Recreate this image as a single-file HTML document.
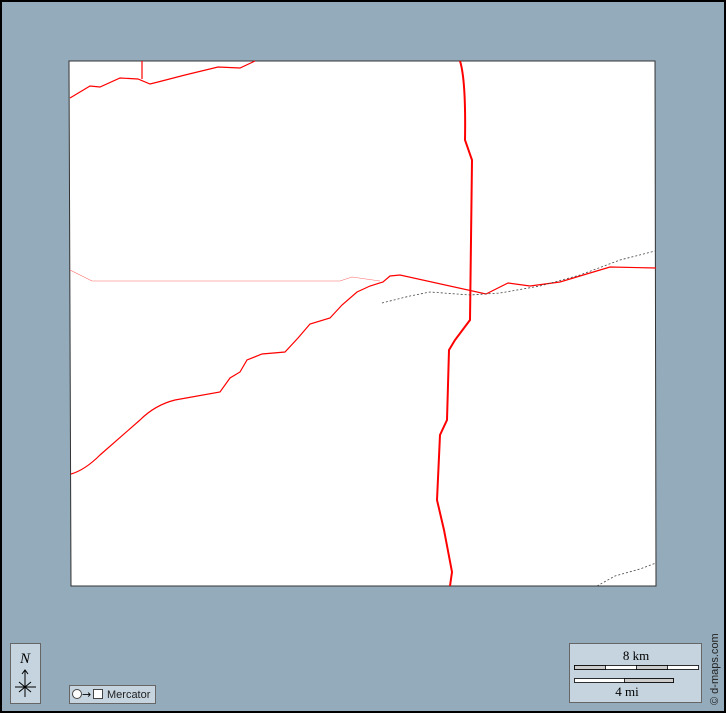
<!DOCTYPE html>
<html><head><style>
html,body{margin:0;padding:0;}
body{width:726px;height:713px;background:#94abbb;position:relative;overflow:hidden;font-family:"Liberation Serif",serif;}
.frame{position:absolute;left:0;top:0;width:722px;height:709px;border:2px solid #000;border-right-width:2px;}
</style></head><body>
<div class="frame"></div>
<svg width="726" height="713" style="position:absolute;left:0;top:0">
<polygon points="69,61 655,61 656,586 71,586" fill="#fff" stroke="#333" stroke-width="1"/>
<g fill="none" stroke="#f00">
<path d="M70,98 L90,86 L100,87 L120,78 L138,79 L150,84 L158,82 L185,75 L218,67 L240,68 L255,61" stroke-width="1.2"/>
<path d="M142,61 L142,79" stroke-width="1.2"/>
<path d="M460,61 Q466,80 465,140 L472,160 L471,240 L470,320 L455,340 L449,350 L447,420 L440,435 L437,500 L444,530 L452,572 L450,586" stroke-width="2"/>
<path d="M70,270 L92,281 L340,281 L352,277 L380,281" stroke-width="0.6" stroke="#f66"/>
<path d="M71,474 Q85,470 100,455 L140,420 Q155,405 175,400 L220,392 L230,378 L240,372 L247,360 L262,354 L285,352 L298,338 L310,324 L330,318 L342,305 L357,292 L370,286 L383,282 L390,276 L400,275 L486,294 L508,283 L530,286 L560,282 L600,270 L610,267 L656,268" stroke-width="1.2"/>
</g>
<g fill="none" stroke="#444" stroke-width="0.8" stroke-dasharray="2,2">
<path d="M382,303 L410,296 L430,292 L470,295 L500,293 L540,286 L580,275 L620,260 L655,251"/>
<path d="M597,586 L615,576 L640,569 L656,563"/>
</g>
<rect x="10.5" y="643.5" width="30" height="60" fill="#c5d4de" stroke="#666"/>
<text x="25" y="663" font-size="15" font-style="italic" text-anchor="middle" font-family="Liberation Serif">N</text>
<path d="M25,670 L25,697 M22,674 L25,670 L28,674 M15,687 L36,687 M19,682 L31,692 M31,682 L19,692" stroke="#000" fill="none" stroke-width="1"/>
<rect x="69.5" y="685.5" width="86" height="18" fill="#c5d4de" stroke="#666"/>
<circle cx="77" cy="694" r="4.5" fill="#fff" stroke="#444"/>
<text x="82" y="698" font-size="11" font-family="DejaVu Sans">→</text>
<rect x="93.5" y="689.5" width="9" height="9" fill="#fff" stroke="#444"/>
<text x="107" y="698" font-size="11" font-family="Liberation Sans" fill="#222">Mercator</text>
<rect x="569.5" y="643.5" width="132" height="59" fill="#c5d4de" stroke="#666"/>
<text x="636" y="660" font-size="13" text-anchor="middle">8 km</text>
<rect x="574.5" y="665.5" width="124" height="4" fill="#fff" stroke="#000" stroke-width="0.8"/>
<rect x="574.5" y="665.5" width="31" height="4" fill="#ccc" stroke="#000" stroke-width="0.8"/>
<rect x="636.5" y="665.5" width="31" height="4" fill="#ccc" stroke="#000" stroke-width="0.8"/>
<rect x="574.5" y="678.5" width="99" height="4" fill="#fff" stroke="#000" stroke-width="0.8"/>
<rect x="624.5" y="678.5" width="49" height="4" fill="#ccc" stroke="#000" stroke-width="0.8"/>
<text x="627" y="696" font-size="13" text-anchor="middle">4 mi</text>
<text x="718" y="705" font-size="11" font-family="Liberation Sans" transform="rotate(-90 718 705)" fill="#222">© d-maps.com</text>
</svg>
</body></html>
